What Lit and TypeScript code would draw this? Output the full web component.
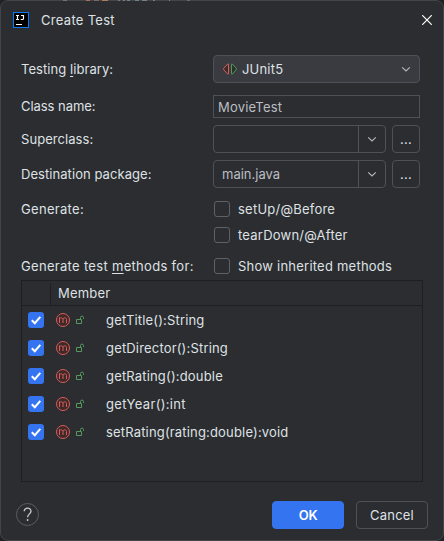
import { LitElement, html, css, svg } from "lit";
import { customElement } from "lit/decorators.js";

const chevron = html`<svg class="chev" width="16" height="16" viewBox="0 0 16 16" fill="none"><path d="M4.2 6.3 8 10l3.8-3.7" stroke="#b4b8bf" stroke-width="1.15"/></svg>`;
const methodIcon = html`<svg class="method" width="16" height="16" viewBox="0 0 16 16" fill="none"><circle cx="8" cy="8" r="6.5" fill="#402929" stroke="#db5c5c"/><path d="M4.5 11V5.4M4.5 7.4C4.5 5.3 8 5.3 8 7.4V11M8 7.4C8 5.3 11.5 5.3 11.5 7.4V11" stroke="#db5c5c"/></svg>`;
const lockIcon = html`<svg class="lock" width="10" height="10" viewBox="0 0 10 10" fill="none"><path d="M1.5 4.5h5v4h-5zM5.5 4.5V2.6a1.5 1.5 0 0 1 3 0V4" stroke="#57965c"/></svg>`;
const tick = svg`<path d="M3.8 8.2 6.8 11.2 12.3 4.9" stroke="#fff" stroke-width="2" fill="none"/>`;

@customElement("app-root")
export class AppRoot extends LitElement {
  static styles = css`
    :host { display: block; width: 444px; height: 541px; background: #202124; font: 13px/16px Inter, "Liberation Sans", sans-serif; letter-spacing: 0.2px; color: #dfe1e5; }
    * { box-sizing: border-box; }
    svg { display: block; flex: none; }
    .dialog { width: 444px; height: 541px; background: #2b2d30; border: 1px solid #43454a; border-radius: 8px; display: flex; flex-direction: column; position: relative; }
    .behind { position: absolute; top: -1px; left: 60px; width: 130px; height: 1px; background: linear-gradient(90deg, transparent 2px, #6d7479 2px 6px, transparent 6px 25px, #a87258 25px 29px, transparent 29px 33px, #80665d 33px 38px, transparent 38px 41px, #b27a5c 41px 47px, transparent 47px 57px, #6b7c8d 57px 59px, transparent 59px 62px, #857d72 62px 64px, transparent 64px 66px, #71818c 66px 69px, transparent 69px 74px, #71818c 74px 78px, transparent 78px 81px, #7b7f80 81px 86px, transparent 86px 92px, #71818c 92px 94px, transparent 94px 108px, #8e8879 108px 109px, transparent 109px 126px, #696c70 126px 129px, transparent 129px); }
    .title { height: 38px; padding: 0 11px 0 12px; display: flex; align-items: center; gap: 12px; flex: none; }
    .title span { flex: 1; letter-spacing: 0.3px; }
    .form { padding: 16px 23px 0 20px; display: flex; flex-direction: column; flex: none; }
    .row { display: grid; grid-template-columns: 192px 207px; align-items: center; margin-bottom: 7px; height: 28px; }
    .row.select { margin-bottom: 12px; }
    .row.name { height: 23px; }
    .row.name label { padding-bottom: 1px; }
    .row.check { height: 16px; margin-bottom: 10px; }
    .row.first { margin-top: 6px; }
    .row.third { margin: 5px 0 6px; }
    .tight { letter-spacing: 0.06px; }
    .tighter { letter-spacing: -0.05px; }
    .loose { letter-spacing: 0.31px; }
    .combo { height: 28px; border: 1px solid #4e5157; border-radius: 4px; display: flex; align-items: center; padding-left: 8px; }
    .dropdown { background: #393b40; padding-right: 5px; }
    .dropdown span { flex: 1; margin-left: 4px; }
    .input { height: 23px; border: 1px solid #4e5157; padding: 2px 4px; color: #bcbec4; line-height: 18px; }
    .pair { display: flex; gap: 6px; }
    .pair .combo { width: 173px; color: #bcbec4; letter-spacing: 0; }
    .pair .combo span { flex: 1; }
    .arrow { width: 27px; height: 26px; border-left: 1px solid #4e5157; display: grid; place-items: center; }
    .more { width: 28px; height: 28px; border: 1px solid #4e5157; border-radius: 4px; text-align: center; line-height: 27px; }
    .checkline { display: flex; gap: 8px; align-items: center; padding-left: 1px; letter-spacing: 0.23px; }
    .box { width: 16px; height: 16px; border: 1px solid #5e6167; border-radius: 3px; flex: none; }
    u { text-decoration: underline; text-decoration-thickness: 1px; text-underline-offset: 2px; }
    .table { margin-right: -3px; width: 402px; height: 202px; border: 1px solid #1e1f22; }
    .head { height: 25px; border-bottom: 1px solid #1e1f22; display: flex; align-items: center; }
    .head i { width: 29px; height: 22px; border-right: 1px solid #1e1f22; margin-top: 2px; }
    .head span { margin-left: 7px; }
    .member { height: 28px; display: flex; align-items: center; padding-left: 6px; }
    .on { background: #3574f0; border-radius: 3px; }
    .method { margin-left: 11px; }
    .lock { margin-left: 4px; }
    .member span { margin-left: 21px; letter-spacing: 0.17px; }
    .member:nth-child(5) span { letter-spacing: 0.33px; }
    .foot { display: flex; align-items: center; gap: 12px; height: 28px; padding: 0 15px; margin-top: 19px; }
    .help { margin-right: auto; }
    .btn { width: 72px; height: 28px; border: 1px solid #4e5157; border-radius: 4px; text-align: center; line-height: 26px; }
    .ok { background: #3574f0; border-color: #3574f0; color: #fff; font-weight: 600; letter-spacing: -0.4px; }
  `;

  members = ["getTitle():String", "getDirector():String", "getRating():double", "getYear():int", "setRating(rating:double):void"];

  combo(value: string) {
    return html`<div class="pair"><div class="combo"><span>${value}</span><div class="arrow">${chevron}</div></div><div class="more">...</div></div>`;
  }

  option(label: string) {
    return html`<div class="checkline"><div class="box"></div><span>${label}</span></div>`;
  }

  render() {
    return html`<div class="dialog">
      <div class="behind"></div>
      <div class="title">
        <svg width="16" height="16" viewBox="0 0 16 16" fill="none"><rect x=".5" y=".5" width="15" height="15" fill="#000" stroke="#087cfa"/><path d="M3 3.5h3M4.5 3.5v4M3 7.5h3M8 3.5h2.5v3q0 1-1 1H7.7" stroke="#fff" stroke-width="1.15"/><path d="M3 12.5h6" stroke="#fff"/></svg>
        <span>Create Test</span>
        <svg width="10" height="10" viewBox="0 0 10 10" fill="none"><path d="m.2.2 9.6 9.6M9.8.2.2 9.8" stroke="#fff" stroke-width="1.2"/></svg>
      </div>
      <div class="form">
        <div class="row select"><label class="tight">Testing <u>l</u>ibrary:</label><div class="combo dropdown"><svg width="16" height="16" viewBox="0 0 16 16" fill="none"><path d="M6.5 3.4q0-.9-.8-.4L1.8 7.2q-.6.8 0 1.6L5.7 13q.8.5.8-.4z" fill="#402929" stroke="#db5c5c"/><path d="M9.5 3.4q0-.9.8-.4l3.9 4.2q.6.8 0 1.6L10.3 13q-.8.5-.8-.4z" fill="#253627" stroke="#57965c"/></svg><span>JUnit5</span>${chevron}</div></div>
        <div class="row name"><label class="tighter">Class name:</label><div class="input">MovieTest</div></div>
        <div class="row"><label class="tight">Superclass:</label>${this.combo("")}</div>
        <div class="row"><label class="tight">Destination package:</label>${this.combo("main.java")}</div>
        <div class="row check first"><label class="loose">Generate:</label>${this.option("setUp/@Before")}</div>
        <div class="row check"><label></label>${this.option("tearDown/@After")}</div>
        <div class="row check third"><label class="loose">Generate test <u>m</u>ethods for:</label>${this.option("Show inherited methods")}</div>
        <div class="table">
          <div class="head"><i></i><span>Member</span></div>
          ${this.members.map((m) => html`<div class="member"><svg class="on" width="16" height="16" viewBox="0 0 16 16">${tick}</svg>${methodIcon}${lockIcon}<span>${m}</span></div>`)}
        </div>
      </div>
      <div class="foot">
        <svg class="help" width="24" height="24" viewBox="0 0 24 24" fill="none"><circle cx="11.5" cy="11.5" r="11" stroke="#5a5d63"/><path d="M8.2 8.3c0-4.2 6.8-4.2 6.8 0 0 2.5-3.4 2.8-3.4 6" stroke="#ced0d6" stroke-width="1.3"/><circle cx="11.6" cy="17" r=".9" fill="#ced0d6"/></svg>
        <div class="btn ok">OK</div><div class="btn">Cancel</div>
      </div>
    </div>`;
  }
}
